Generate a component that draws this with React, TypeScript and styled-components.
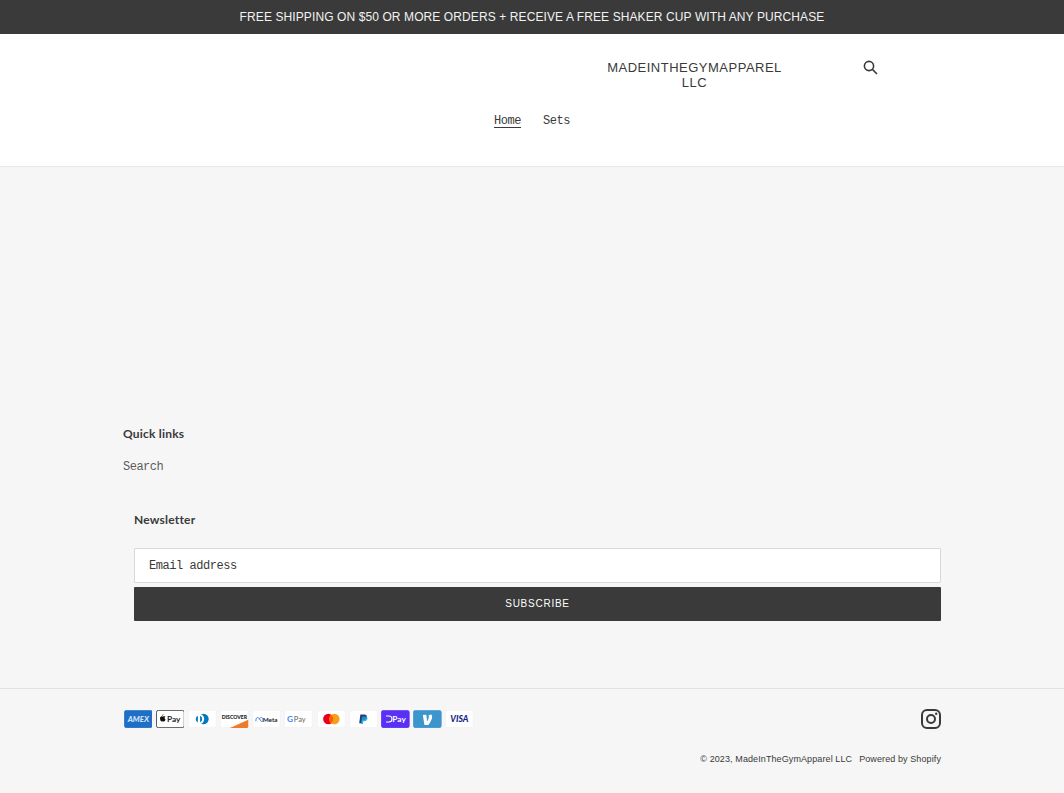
import React from "react";
import styled, { createGlobalStyle } from "styled-components";

const Global = createGlobalStyle`
  html, body { margin: 0; padding: 0; background: #f6f6f6; }
  * { box-sizing: border-box; }
  body { font-family: "Liberation Sans", Arial, sans-serif; color: #3a3a3a; }
`;

const Page = styled.div`
  width: 1064px;
  height: 793px;
  overflow: hidden;
  background: #f6f6f6;
  display: flex;
  flex-direction: column;
`;

const Announcement = styled.div`
  height: 34px;
  flex: none;
  background: #3a3a3a;
  color: #f2f2f2;
  font-size: 12px;
  letter-spacing: 0.1px;
  display: flex;
  align-items: center;
  justify-content: center;
`;

const Header = styled.header`
  height: 133px;
  flex: none;
  background: #fff;
  border-bottom: 1px solid #e9e9e9;
  display: flex;
  flex-direction: column;
`;

const Masthead = styled.div`
  height: 71px;
  padding-top: 26px;
  display: grid;
  grid-template-columns: 604px 181px 73px 24px;
`;

const Logo = styled.div`
  grid-column: 2;
  text-align: center;
  font-size: 13px;
  line-height: 15px;
  letter-spacing: 0.5px;
  color: #3a3a3a;
`;

const SearchButton = styled.button`
  grid-column: 4;
  width: 24px;
  height: 22px;
  margin-top: -4px;
  padding: 0;
  border: 0;
  background: none;
  color: #3a3a3a;
  display: flex;
  align-items: center;
  justify-content: center;
`;

const Nav = styled.nav`
  display: flex;
  justify-content: center;
  gap: 22px;
  margin-top: 10px;
`;

const NavLink = styled.a<{ $active?: boolean }>`
  font-family: "Liberation Mono", monospace;
  font-size: 12px;
  line-height: 12px;
  letter-spacing: -0.45px;
  color: #3a3a3a;
  border-bottom: ${(p) => (p.$active ? "1px solid #3a3a3a" : "1px solid transparent")};
`;

const Main = styled.main`
  height: 250px;
  flex: none;
`;

const Footer = styled.footer`
  flex: 1;
  display: flex;
  flex-direction: column;
`;

const Links = styled.div`
  padding: 9px 0 0 123px;
  height: 88px;
`;

const FooterTitle = styled.div`
  font-family: Lato, sans-serif;
  font-weight: 700;
  font-size: 12px;
  line-height: 15px;
  letter-spacing: 0.2px;
  color: #3a3a3a;
`;

const FooterLink = styled.a`
  display: block;
  margin-top: 19px;
  font-family: "Liberation Mono", monospace;
  font-size: 12px;
  line-height: 15px;
  letter-spacing: -0.5px;
  color: #5c5c5c;
`;

const Newsletter = styled.section`
  width: 807px;
  margin-left: 134px;
  padding-top: 7px;
  height: 183px;
  display: flex;
  flex-direction: column;
`;

const EmailField = styled.div`
  height: 35px;
  margin-top: 21px;
  padding-left: 14px;
  background: #fff;
  border: 1px solid #d9d9d9;
  border-radius: 1px;
  font-family: "Liberation Mono", monospace;
  font-size: 12px;
  letter-spacing: -0.45px;
  color: #3a3a3a;
  display: flex;
  align-items: center;
`;

const Subscribe = styled.button`
  height: 34px;
  margin-top: 4px;
  padding: 0 0 2px;
  border: 0;
  border-radius: 1px;
  background: #3a3a3a;
  color: #fff;
  font-family: "Liberation Sans", sans-serif;
  font-size: 10px;
  letter-spacing: 0.75px;
`;

const Bottom = styled.div`
  border-top: 1px solid #e2e2e2;
  padding: 19px 123px 0;
  flex: 1;
  display: flex;
  flex-direction: column;
`;

const BottomRow = styled.div`
  display: flex;
  justify-content: space-between;
  align-items: center;
  height: 21px;
`;

const Payments = styled.div`
  display: flex;
  gap: 3.5px;
  padding-left: 0.5px;
`;

const Card = styled.svg`
  width: 28.7px;
  height: 18px;
  display: block;
`;

const Instagram = styled.svg`
  width: 20px;
  height: 20px;
  display: block;
`;

const Legal = styled.div`
  margin-top: 24px;
  display: flex;
  justify-content: flex-end;
  gap: 7px;
  font-size: 9px;
  line-height: 12px;
  letter-spacing: 0.1px;
  color: #3a3a3a;
`;

const Shell = ({ children, fill = "#fff", stroke = "#f0f0f0" }: { children?: React.ReactNode; fill?: string; stroke?: string }) => (
  <Card viewBox="0 0 38 24" aria-hidden="true">
    <rect x="0.5" y="0.5" width="37" height="23" rx="2.5" fill={fill} stroke={stroke} />
    {children}
  </Card>
);

const label = { fontFamily: "Lato, sans-serif" };

export default function App() {
  return (
    <Page>
      <Global />
      <Announcement>FREE SHIPPING ON $50 OR MORE ORDERS + RECEIVE A FREE SHAKER CUP WITH ANY PURCHASE</Announcement>
      <Header>
        <Masthead>
          <Logo>MADEINTHEGYMAPPAREL LLC</Logo>
          <SearchButton aria-label="Search">
            <svg width="15" height="15" viewBox="0 0 15 15" fill="none" stroke="currentColor" strokeWidth="1.6">
              <circle cx="6" cy="6" r="4.6" />
              <path d="M9.4 9.4 14 14" />
            </svg>
          </SearchButton>
        </Masthead>
        <Nav>
          <NavLink $active>Home</NavLink>
          <NavLink>Sets</NavLink>
        </Nav>
      </Header>
      <Main />
      <Footer>
        <Links>
          <FooterTitle>Quick links</FooterTitle>
          <FooterLink>Search</FooterLink>
        </Links>
        <Newsletter>
          <FooterTitle>Newsletter</FooterTitle>
          <EmailField>Email address</EmailField>
          <Subscribe>SUBSCRIBE</Subscribe>
        </Newsletter>
        <Bottom>
          <BottomRow>
            <Payments>
              <Shell fill="#1f6fc6" stroke="#1f6fc6">
                <text x="19" y="15.800" textAnchor="middle" fontSize="10.500" fontWeight="900" fontStyle="italic" fill="#cfe3fa" style={label}>AMEX</text>
              </Shell>
              <Shell stroke="#222">
                <path d="M10.5 8.2c-.6 0-1.1.4-1.5.4s-.8-.4-1.4-.4c-1.4 0-2.4 1.3-2.4 3 0 2 1.3 4.2 2.4 4.200.5 0 .8-.4 1.400-.4s.9.4 1.500.4c1 0 1.900-1.600 2.100-2.600-1.600-.8-1.600-3.300 0-4-.4-.4-1.200-.6-2.100-.6zM9 7.600c.6-.6 1-1.300.8-2-.8.100-1.600.9-1.600 2z" fill="#111" />
                <text x="14.500" y="16" fontSize="11" fontWeight="700" fill="#222" style={label}>Pay</text>
              </Shell>
              <Shell>
                <circle cx="20.500" cy="12" r="7" fill="#0079be" />
                <circle cx="14.500" cy="12" r="7" fill="#fff" />
                <path d="M13 7.500a5 5 0 0 0 0 9zM16 7.500a5 5 0 0 1 0 9z" fill="#0079be" />
              </Shell>
              <Shell>
                <path d="M13 24 37.500 13v8a2.500 2.500 0 0 1-2.500 3z" fill="#ee7a2b" />
                <text x="19" y="12" textAnchor="middle" fontSize="6.800" fontWeight="900" fill="#222" style={label}>DISCOVER</text>
              </Shell>
              <Shell>
                <text x="24" y="15.500" textAnchor="middle" fontSize="8.500" fontWeight="700" fill="#222" style={label}>Meta</text>
                <path d="M5 15c0-6 3-6 5-3l2 3c1 1 2.500.5 2.500-1.500 0-4-3-5-5-1" fill="none" stroke="#2b6cd4" strokeWidth="1.100" />
              </Shell>
              <Shell>
                <text x="4" y="16.500" fontSize="11" fontWeight="700" fill="#4285f4" style={label}>G</text>
                <text x="13" y="16" fontSize="10" fill="#5f6368" style={label}>Pay</text>
              </Shell>
              <Shell>
                <circle cx="15" cy="12" r="7" fill="#eb001b" />
                <circle cx="23" cy="12" r="7" fill="#f79e1b" />
                <path d="M19 6.500a7 7 0 0 1 0 11 7 7 0 0 1 0-11z" fill="#ff5f00" />
              </Shell>
              <Shell>
                <path d="M15 6h5c3 0 4 1.500 3.500 3.500-.5 2.500-2.500 3.500-4.500 3.500h-1.500l-.8 4.500H13.500z" fill="#253b80" />
                <path d="M17.500 8.500h4.500c2.500.3 2.800 2 2.300 3.500-.6 2-2.500 3-4.300 3h-1l-.7 3.500h-2.800z" fill="#179bd7" opacity=".85" />
              </Shell>
              <Shell fill="#5a31f4" stroke="#5a31f4">
                <path d="M6.500 8h4a4 4 0 0 1 0 8h-4" fill="none" stroke="#fff" strokeWidth="1.400" />
                <text x="15" y="16" fontSize="11" fontWeight="700" fill="#fff" style={label}>Pay</text>
              </Shell>
              <Shell fill="#3d95ce" stroke="#3d95ce">
                <path d="M24.500 6c.6 1 .9 2 .9 3.300 0 3.300-2.800 7.600-5.100 10.700h-5.200L13 6.800l4.600-.4 1.100 8.900c1-1.700 2.300-4.300 2.300-6.100 0-1-.2-1.700-.4-2.300z" fill="#fff" />
              </Shell>
              <Shell>
                <text x="19" y="16.500" textAnchor="middle" fontSize="11.500" fontWeight="900" fontStyle="italic" fill="#142688" style={label}>VISA</text>
              </Shell>
            </Payments>
            <Instagram viewBox="0 0 20 20" fill="none" stroke="#3a3a3a" aria-label="Instagram">
              <rect x="1" y="1" width="18" height="18" rx="5" strokeWidth="2" />
              <circle cx="10" cy="10" r="4" strokeWidth="2" />
              <circle cx="15.200" cy="4.800" r="1.200" fill="#3a3a3a" stroke="none" />
            </Instagram>
          </BottomRow>
          <Legal>
            <span>© 2023, MadeInTheGymApparel LLC</span>
            <span>Powered by Shopify</span>
          </Legal>
        </Bottom>
      </Footer>
    </Page>
  );
}
